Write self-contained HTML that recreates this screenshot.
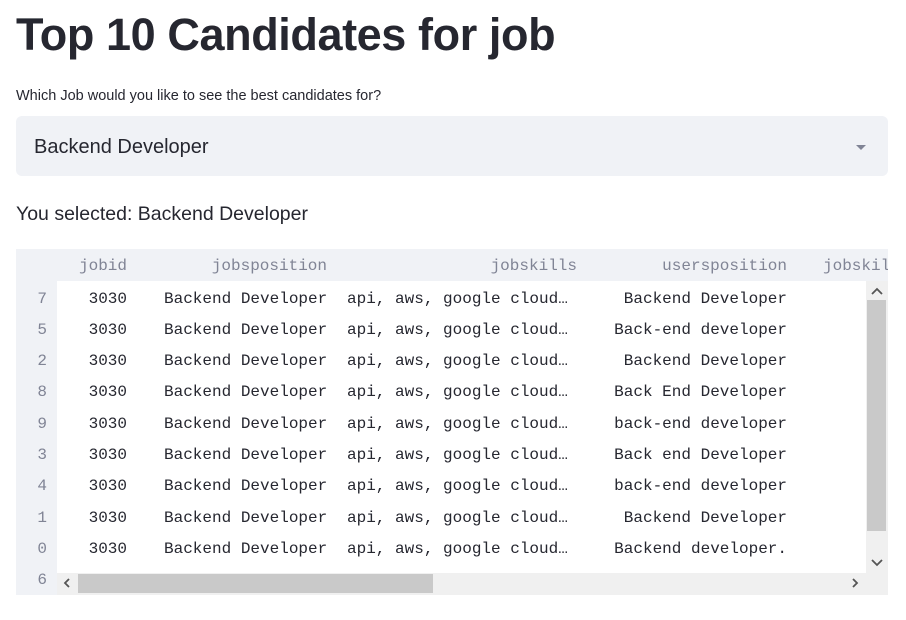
<!DOCTYPE html>
<html><head><style>
body{margin:0;width:906px;height:620px;background:#fff;position:relative;overflow:hidden;font-family:"Liberation Sans",sans-serif;color:#262730}
.a{position:absolute;white-space:pre}
h1{position:absolute;left:16px;top:9px;margin:0;font-size:45px;font-weight:bold;letter-spacing:-0.4px;color:#262730}
.m{font-family:"Liberation Mono",monospace;font-size:16px;line-height:31px}
.h{color:#808495}
.r{text-align:right}
</style></head><body>
<h1>Top 10 Candidates for job</h1>
<div class="a" style="left:16px;top:88px;font-size:14.5px">Which Job would you like to see the best candidates for?</div>
<div class="a" style="left:16px;top:116px;width:872px;height:60px;background:#f0f2f6;border-radius:6px"></div>
<div class="a" style="left:34px;top:136px;font-size:20px">Backend Developer</div>
<div class="a" style="left:856px;top:145px;width:0;height:0;border-left:5px solid transparent;border-right:5px solid transparent;border-top:5px solid #808495"></div>
<div class="a" style="left:16px;top:203px;font-size:19.5px">You selected: Backend Developer</div>

<div class="a" style="left:16px;top:249px;width:872px;height:346px;background:#f0f2f6"></div>
<div class="a" style="left:57px;top:281px;width:809px;height:292px;background:#fff"></div>
<div class="a" style="left:16px;top:249px;width:872px;height:32px;overflow:hidden">
<div class="a m h r" style="left:0;width:111px;top:2px">jobid</div>
<div class="a m h r" style="left:0;width:311px;top:2px">jobsposition</div>
<div class="a m h r" style="left:0;width:561px;top:2px">jobskills</div>
<div class="a m h r" style="left:0;width:771px;top:2px">usersposition</div>
<div class="a m h" style="left:807px;top:2px">jobskills</div>
</div>
<div id="rows"></div>
<div class="a" style="left:57px;top:573px;width:809px;height:22px;background:#f0f0f0"></div>
<div class="a" style="left:78px;top:574px;width:355px;height:19px;background:#c9c9c9"></div>
<svg class="a" style="left:62px;top:578px" width="10" height="10"><path d="M7 1L3 5L7 9" fill="none" stroke="#555" stroke-width="1.8"/></svg>
<svg class="a" style="left:850px;top:578px" width="10" height="10"><path d="M3 1L7 5L3 9" fill="none" stroke="#555" stroke-width="1.8"/></svg>
<div class="a" style="left:866px;top:281px;width:22px;height:314px;background:#f0f0f0"></div>
<div class="a" style="left:867px;top:300px;width:19px;height:231px;background:#c9c9c9"></div>
<svg class="a" style="left:871px;top:287px" width="12" height="10"><path d="M1 7L6 2L11 7" fill="none" stroke="#555" stroke-width="1.8"/></svg>
<svg class="a" style="left:871px;top:557px" width="12" height="10"><path d="M1 3L6 8L11 3" fill="none" stroke="#555" stroke-width="1.8"/></svg>
<script>
var idx=[7,5,2,8,9,3,4,1,0,6],up=["Backend Developer","Back-end developer","Backend Developer","Back End Developer","back-end developer","Back end Developer","back-end developer","Backend Developer","Backend developer.","Backend Developer"];
var h="";
for(var i=0;i<10;i++){var t=283.5+i*31.3;
h+='<div class="a m h r" style="left:16px;width:31px;top:'+t+'px">'+idx[i]+'</div>';
if(i<9){h+='<div class="a m r" style="left:16px;width:111px;top:'+t+'px">3030</div>'+
'<div class="a m" style="left:164px;top:'+t+'px">Backend Developer</div>'+
'<div class="a m" style="left:347px;top:'+t+'px">api, aws, google cloud…</div>'+
'<div class="a m r" style="left:16px;width:771px;top:'+t+'px">'+up[i]+'</div>';}}
document.getElementById("rows").innerHTML=h;
</script>
</body></html>
